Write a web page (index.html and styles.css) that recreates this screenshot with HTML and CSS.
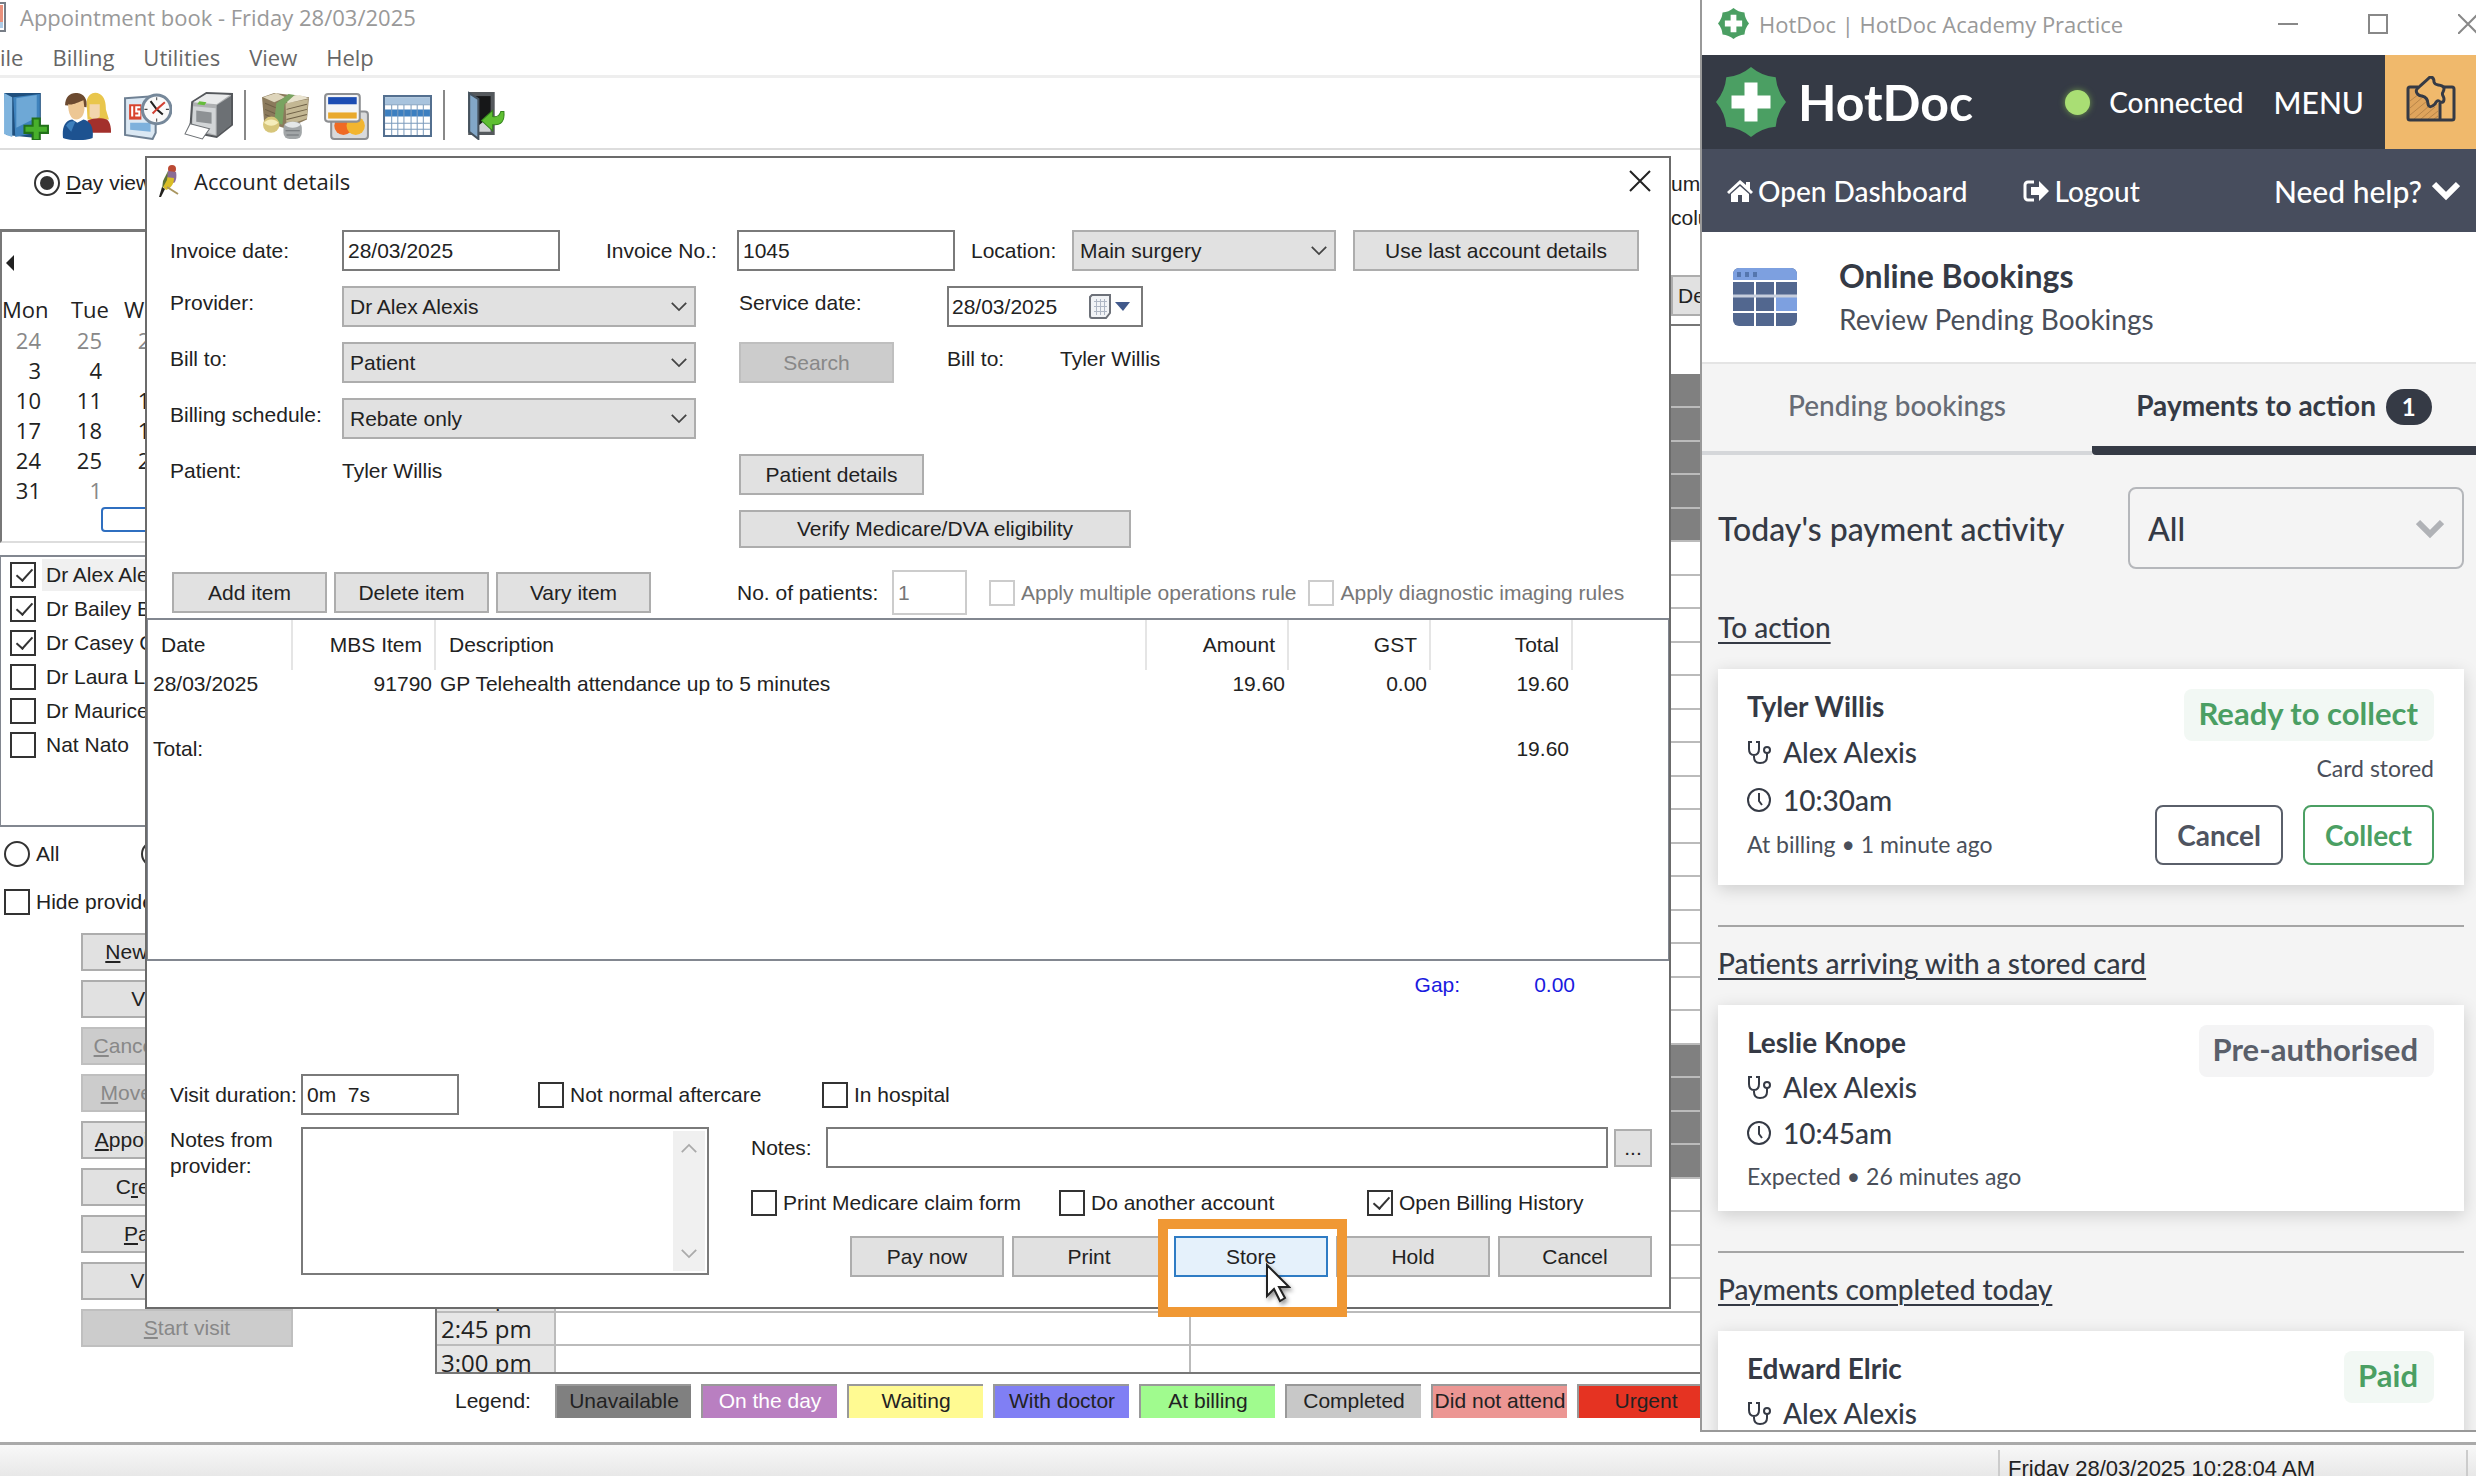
FILE: index.html
```html
<!DOCTYPE html>
<html lang="en">
<head>
    <meta charset="UTF-8">
    <meta name="viewport" content="width=device-width, initial-scale=1.0">
    <title>Appointment book - Friday 28/03/2025</title>
    <link rel="stylesheet" href="styles.css">
</head>
<body>
    <svg class="sprite" aria-hidden="true">
        <symbol id="hotdoc" viewBox="0 0 70 70">
            <path fill="#4b9f63" d="M35 0Q45.7 9.1 59.7 10.3Q60.9 24.3 70 35Q60.9 45.7 59.7 59.7Q45.7 60.9 35 70Q24.3 60.9 10.3 59.7Q9.1 45.7 0 35Q9.1 24.3 10.3 10.3Q24.3 9.1 35 0Z"/>
            <path fill="#fff" d="M28.500 15.500h13v13h13v13h-13v13h-13v-13h-13v-13h13z"/>
        </symbol>
        <symbol id="chevron" viewBox="0 0 20 12">
            <path fill="none" stroke="currentColor" stroke-width="2" d="M2 2l8 8 8-8"/>
        </symbol>
        <symbol id="chevron-bold" viewBox="0 0 28 20">
            <path fill="none" stroke="currentColor" stroke-width="6" d="M2 3l12 12 12-12"/>
        </symbol>
        <symbol id="stethoscope" viewBox="0 0 24 24">
            <g fill="none" stroke="currentColor" stroke-width="2">
                <path d="M5 2H2v7c0 4 2 6 5 6s5-2 5-6V2H9M7 15v2c0 4 2 6 6 6s7-2 7-6v-4"/>
                <circle cx="20" cy="10" r="3"/>
            </g>
        </symbol>
        <symbol id="clock" viewBox="0 0 24 24">
            <circle cx="12" cy="12" r="11" fill="none" stroke="currentColor" stroke-width="2"/>
            <path fill="none" stroke="currentColor" stroke-width="2" d="M12 5v8l3 4"/>
        </symbol>
    </svg>

    <!-- Appointment book -->
    <div class="app">
        <header class="app-title">
            <svg class="app-icon" viewBox="0 0 7 30"><path fill="#e9917d" d="M0 3h3v17H0z"/><path fill="#aecbe6" d="M0 20h3v6H0z"/><path fill="none" stroke="#777d86" stroke-width="2" d="M0 1h5v28H0"/></svg>
            <span>Appointment book - Friday 28/03/2025</span>
        </header>
        <nav class="menu">
            <a href="#">ile</a>
            <a href="#">Billing</a>
            <a href="#">Utilities</a>
            <a href="#">View</a>
            <a href="#">Help</a>
        </nav>
        <div class="toolbar">
            <button class="tool" aria-label="New appointment">
                <svg viewBox="0 0 48 48"><path fill="#1f4f7d" d="M3 2h36v38l-4 6-30-3z"/><path fill="#7fb4de" d="M3 2l8 4v39l-8-3z"/><path fill="#3f83bd" d="M12 6l26-3v37l-24 5z"/><path fill="#6ea8d6" d="M15 7l20-3v22L15 36z"/><path fill="#48b02c" stroke="#22701a" stroke-width="2" d="M31 27h7v7h8v7h-8v7h-7v-7h-8v-7h8z"/></svg>
            </button>
            <button class="tool" aria-label="Patients">
                <svg viewBox="0 0 48 48"><path fill="#e9c64c" d="M24 10c2-8 8-10 13-7 5 3 6 9 6 15l3 10H25z"/><path fill="#f3d6ae" d="M27 13h10v12l-5 4-5-4z"/><path fill="#a3302c" d="M25 29c6-3 14-3 19-1 4 3 4 10 4 13H26z"/><path fill="#6c4a30" d="M3 14C3 5 9 1 15 2c7 1 10 6 9 14z"/><path fill="#edc794" d="M6 13c5 1 9-2 15-4l1 8c0 6-3 11-8 11s-8-6-8-15z"/><path fill="#1d5290" d="M1 46c-1-9 1-17 9-18l5 3 6-3c8 2 10 9 9 18-8 3-21 3-29 0z"/><path fill="#3e80bd" d="M4 34c2-4 6-5 9-4l-4 10z"/></svg>
            </button>
            <button class="tool" aria-label="Appointments">
                <svg viewBox="0 0 48 48"><path fill="#dbe8f3" stroke="#6f8194" stroke-width="2" d="M2 7l30-2v36l-3 6-27-4z"/><path fill="#d8442e" d="M6 13h12v15H6z"/><path fill="#fff" d="M8 15h2v10H8zM12 15h5v2h-3v2h3v6h-5v-2h3v-2h-3z"/><path fill="#7eb1dc" d="M7 31h20v9l-20-2z"/><circle cx="33" cy="18" r="14" fill="#fafafa" stroke="#76889a" stroke-width="3"/><path stroke="#222" stroke-width="2" fill="none" d="M27 10l6 8 6 5"/><path stroke="#d24032" fill="none" stroke-width="2" d="M33 18l8-7M33 18l-4 4"/><path stroke="#444" d="M33 6v3M33 27v3M21 18h3M42 18h3"/></svg>
            </button>
            <button class="tool" aria-label="Print">
                <svg viewBox="0 0 48 48"><path fill="#aeb0b2" stroke="#55585c" stroke-width="2" d="M8 11L22 2l25 1v30L32 45 6 40z"/><path fill="#e9eaeb" d="M9 11L22 3l23 1-13 9z"/><path fill="#6c7074" d="M32 14l14-9v28L32 44z"/><path fill="#d2d5d7" d="M9 15l22 2v26L8 36z"/><path fill="#8d9194" d="M12 19l15 2v11l-15-2z"/><path fill="#65bd3b" d="M15 10l7 1-2 3-7-1z"/><path fill="#fff" stroke="#6c7074" d="M6 32l19 5-7 10-17-5z"/></svg>
            </button>
            <span class="tool-sep"></span>
            <button class="tool" aria-label="Accounts">
                <svg viewBox="0 0 48 48"><path fill="#8b7a5c" d="M1 6l12-4 34 4-2 22-20 9-22-7z"/><path fill="#ded5bb" d="M2 6l13-4 9 4-11 5z"/><path fill="#c3b793" d="M24 12l22-4-1 19-20 7z"/><path fill="#e9e3cf" d="M24 6l14-2 9 3-21 5z"/><path stroke="#6e6046" d="M25 18l20-5M25 23l20-5M25 28l20-5M4 12l12 5M4 18l12 5M4 23l12 5"/><path fill="#79a361" d="M15 12l12-9 6 1-10 9-2 20-8-3z"/><circle cx="10" cy="33" r="8" fill="#d7c67b"/><path fill="#f5edbb" d="M3 31c4-4 10-4 14 0-4 4-10 4-14 0z"/><rect x="22" y="30" width="18" height="17" rx="6" fill="#a2a6a8"/><path fill="#e4e7e8" d="M23 33c4-4 12-4 16 0-4 4-12 4-16 0z"/><path stroke="#6f7376" d="M24 39h14M25 43h12"/></svg>
            </button>
            <button class="tool" aria-label="Cards">
                <svg viewBox="0 0 48 48"><rect x="9" y="20" width="36" height="27" rx="3" fill="#d9dadb" stroke="#8d8f92" stroke-width="2"/><circle cx="21" cy="34" r="9" fill="#ef6a24"/><circle cx="33" cy="34" r="9" fill="#f2b52f"/><rect x="3" y="3" width="34" height="27" rx="3" fill="#f4f5f6" stroke="#8d8f92" stroke-width="2"/><path fill="#1c4db3" d="M6 6h28v7H6z"/><path fill="#e9a92d" d="M6 21h28v6H6z"/></svg>
            </button>
            <button class="tool" aria-label="Day sheet">
                <svg viewBox="0 0 48 48"><path fill="#fff" stroke="#536f8f" stroke-width="2" d="M1 5h46v39H1z"/><path fill="#a8c3dd" d="M2 6h44v7H2z"/><path fill="#3c7fc0" d="M2 18h44v7H2z"/><path stroke="#7c9cbd" d="M2 13.500h44M2 31.500h44M2 37.500h44M8.500 13v30M14.500 13v30M20.500 13v30M27.500 13v30M33.500 13v30M39.500 13v30"/></svg>
            </button>
            <span class="tool-sep"></span>
            <button class="tool" aria-label="Exit">
                <svg viewBox="0 0 48 48"><path fill="#55595d" d="M8 1h26v42H8z"/><path fill="#161718" d="M12 5h18v34H12z"/><path fill="#d0d3d5" d="M18 34l12-10v16H18z"/><path fill="#82a7c8" stroke="#45525e" stroke-width="2" d="M9 2l9 6v39L9 40z"/><path fill="#5fbf32" stroke="#34851c" stroke-width="1" d="M21 29l11-10v6c5 1 7-1 8-5h3c1 10-3 14-11 13v6z"/></svg>
            </button>
        </div>

        <div class="app-body">
            <aside class="sidebar">
                <label class="day-view"><input type="radio" name="view" checked><span><u>D</u>ay view</span></label>
                <div class="calendar">
                    <span class="cal-prev"></span>
                    <table>
                        <thead><tr><th>Mon</th><th>Tue</th><th>Wed</th></tr></thead>
                        <tbody>
                            <tr class="other"><td>24</td><td>25</td><td>26</td></tr>
                            <tr><td>3</td><td>4</td><td>5</td></tr>
                            <tr><td>10</td><td>11</td><td>12</td></tr>
                            <tr><td>17</td><td>18</td><td>19</td></tr>
                            <tr><td>24</td><td>25</td><td>26</td></tr>
                            <tr><td>31</td><td class="other">1</td><td class="other">2</td></tr>
                        </tbody>
                    </table>
                    <span class="cal-today"></span>
                </div>
                <div class="providers">
                    <label class="selected"><input type="checkbox" checked><span>Dr Alex Alexis</span></label>
                    <label><input type="checkbox" checked><span>Dr Bailey B</span></label>
                    <label><input type="checkbox" checked><span>Dr Casey C</span></label>
                    <label><input type="checkbox"><span>Dr Laura La</span></label>
                    <label><input type="checkbox"><span>Dr Maurice</span></label>
                    <label><input type="checkbox"><span>Nat Nato</span></label>
                </div>
                <div class="filter">
                    <label><input type="radio" name="filter"><span>All</span></label>
                    <label><input type="radio" name="filter" aria-label="Selected"></label>
                </div>
                <label class="hide-providers"><input type="checkbox"><span>Hide providers</span></label>
                <div class="side-buttons">
                    <button class="btn"><span><u>N</u>ew appointment</span></button>
                    <button class="btn">View details</button>
                    <button class="btn" disabled><span><u>C</u>ancel appointment</span></button>
                    <button class="btn" disabled><span><u>M</u>ove appointment</span></button>
                    <button class="btn"><span><u>A</u>ppointment details</span></button>
                    <button class="btn"><span>C<u>r</u>eate account</span></button>
                    <button class="btn"><span><u>P</u>ay accounts</span></button>
                    <button class="btn">View history</button>
                    <button class="btn" disabled><span><u>S</u>tart visit</span></button>
                </div>
            </aside>

            <main class="schedule">
                <div class="schedule-options">
                    <p>umn</p>
                    <p>columns</p>
                    <button class="btn">Details</button>
                </div>
                <div class="schedule-grid">
                    <table>
                        <thead><tr><th></th><th></th><th></th><th></th></tr></thead>
                        <tbody>
                            <tr class="off"><th>7:45 am</th><td></td><td></td><td></td></tr>
                            <tr class="off"><th>8:00 am</th><td></td><td></td><td></td></tr>
                            <tr class="off"><th>8:15 am</th><td></td><td></td><td></td></tr>
                            <tr class="off"><th>8:30 am</th><td></td><td></td><td></td></tr>
                            <tr class="off"><th>8:45 am</th><td></td><td></td><td></td></tr>
                            <tr><th>9:00 am</th><td></td><td></td><td></td></tr>
                            <tr><th>9:15 am</th><td></td><td></td><td></td></tr>
                            <tr><th>9:30 am</th><td></td><td></td><td></td></tr>
                            <tr><th>9:45 am</th><td></td><td></td><td></td></tr>
                            <tr><th>10:00 am</th><td></td><td></td><td></td></tr>
                            <tr><th>10:15 am</th><td></td><td></td><td></td></tr>
                            <tr><th>10:30 am</th><td></td><td></td><td></td></tr>
                            <tr><th>10:45 am</th><td></td><td></td><td></td></tr>
                            <tr><th>11:00 am</th><td></td><td></td><td></td></tr>
                            <tr><th>11:15 am</th><td></td><td></td><td></td></tr>
                            <tr><th>11:30 am</th><td></td><td></td><td></td></tr>
                            <tr><th>11:45 am</th><td></td><td></td><td></td></tr>
                            <tr><th>12:00 pm</th><td></td><td></td><td></td></tr>
                            <tr><th>12:15 pm</th><td></td><td></td><td></td></tr>
                            <tr><th>12:30 pm</th><td></td><td></td><td></td></tr>
                            <tr class="off"><th>12:45 pm</th><td></td><td></td><td></td></tr>
                            <tr class="off"><th>1:00 pm</th><td></td><td></td><td></td></tr>
                            <tr class="off"><th>1:15 pm</th><td></td><td></td><td></td></tr>
                            <tr class="off"><th>1:30 pm</th><td></td><td></td><td></td></tr>
                            <tr><th>1:45 pm</th><td></td><td></td><td></td></tr>
                            <tr><th>2:00 pm</th><td></td><td></td><td></td></tr>
                            <tr><th>2:15 pm</th><td></td><td></td><td></td></tr>
                            <tr><th>2:30 pm</th><td></td><td></td><td></td></tr>
                            <tr><th>2:45 pm</th><td></td><td></td><td></td></tr>
                            <tr><th>3:00 pm</th><td></td><td></td><td></td></tr>
                        </tbody>
                    </table>
                </div>
                <div class="legend">
                    <span class="legend-title">Legend:</span>
                    <span class="key unavailable">Unavailable</span>
                    <span class="key on-the-day">On the day</span>
                    <span class="key waiting">Waiting</span>
                    <span class="key with-doctor">With doctor</span>
                    <span class="key at-billing">At billing</span>
                    <span class="key completed">Completed</span>
                    <span class="key missed">Did not attend</span>
                    <span class="key urgent">Urgent</span>
                </div>
            </main>
        </div>
        <footer class="statusbar">
            <span class="status-time">Friday 28/03/2025 10:28:04 AM</span>
        </footer>
    </div>

    <!-- Account details dialog -->
    <section class="dialog">
        <header class="dialog-title">
            <svg class="bird" viewBox="0 0 20 32"><circle cx="13" cy="4" r="4" fill="#bb4a34"/><path fill="#8a6b95" d="M9 6l8 1c1 5 0 9-2 11l-8-3z"/><path fill="#d9bd27" d="M6 12l9 1c0 6-3 10-8 12l-3-3z"/><path fill="#5c7336" d="M9 6L4 16 3 24l5-9z"/><path fill="#23221f" d="M3 22l3 2-4 8H0z"/><path stroke="#a99660" stroke-width="2" d="M8 22l11 7"/></svg>
            <h1>Account details</h1>
            <button class="close" aria-label="Close"><svg viewBox="0 0 22 22"><path stroke="#222" stroke-width="2" d="M1 1l20 20M21 1L1 21"/></svg></button>
        </header>

        <form class="account">
            <div class="row invoice-row">
                <label for="invDate">Invoice date:</label>
                <input class="text" id="invDate" value="28/03/2025">
                <label class="inv-no" for="invNo">Invoice No.:</label>
                <input class="text" id="invNo" value="1045">
                <label class="loc" for="location">Location:</label>
                <div class="select location"><select id="location"><option>Main surgery</option></select><svg><use href="#chevron"/></svg></div>
                <button type="button" class="btn last-account">Use last account details</button>
            </div>
            <div class="row">
                <label for="provider">Provider:</label>
                <div class="select"><select id="provider"><option>Dr Alex Alexis</option></select><svg><use href="#chevron"/></svg></div>
                <label for="serviceDate">Service date:</label>
                <div class="datebox">
                    <input class="text" id="serviceDate" value="28/03/2025">
                    <svg class="date-icon" viewBox="0 0 42 28"><path fill="#f1f3f6" stroke="#6d7179" stroke-width="2" d="M3 2h18v18l-4 5H3a2 2 0 0 1-2-2V4z"/><path stroke="#aeb6c4" stroke-width="1" d="M5 8.500h13M5 13.500h13M5 18.500h13M7.500 6v16M11.500 6v16M15.500 6v16"/><path fill="#41598b" d="M26 9h15l-7 9z"/></svg>
                </div>
            </div>
            <div class="row">
                <label for="billTo">Bill to:</label>
                <div class="select"><select id="billTo"><option>Patient</option></select><svg><use href="#chevron"/></svg></div>
                <button type="button" class="btn search" disabled>Search</button>
                <div class="bill-name"><span>Bill to:</span><span>Tyler Willis</span></div>
            </div>
            <div class="row">
                <label for="schedule">Billing schedule:</label>
                <div class="select"><select id="schedule"><option>Rebate only</option></select><svg><use href="#chevron"/></svg></div>
            </div>
            <div class="row">
                <span>Patient:</span>
                <span>Tyler Willis</span>
                <button type="button" class="btn patient-details">Patient details</button>
            </div>
            <div class="row">
                <button type="button" class="btn verify">Verify Medicare/DVA eligibility</button>
            </div>
            <div class="row item-row">
                <div class="item-buttons">
                    <button type="button" class="btn">Add item</button>
                    <button type="button" class="btn">Delete item</button>
                    <button type="button" class="btn">Vary item</button>
                </div>
                <label class="patients-label" for="patients">No. of patients:</label>
                <input class="text patients" id="patients" value="1" disabled>
                <label class="check disabled"><input type="checkbox" disabled><span>Apply multiple operations rule</span></label>
                <label class="check disabled"><input type="checkbox" disabled><span>Apply diagnostic imaging rules</span></label>
            </div>

            <div class="items">
                <table>
                    <colgroup><col class="c-date"><col class="c-mbs"><col class="c-desc"><col class="c-num"><col class="c-num"><col class="c-num"><col></colgroup>
                    <thead>
                        <tr><th>Date</th><th class="num">MBS Item</th><th>Description</th><th class="num">Amount</th><th class="num">GST</th><th class="num">Total</th><th></th></tr>
                    </thead>
                    <tbody>
                        <tr><td>28/03/2025</td><td class="num">91790</td><td>GP Telehealth attendance up to 5 minutes</td><td class="num">19.60</td><td class="num">0.00</td><td class="num">19.60</td><td></td></tr>
                    </tbody>
                    <tfoot>
                        <tr><td>Total:</td><td></td><td></td><td></td><td></td><td class="num">19.60</td><td></td></tr>
                    </tfoot>
                </table>
            </div>

            <div class="gap-row"><span>Gap:</span><span>0.00</span></div>

            <div class="visit-row">
                <label for="duration">Visit duration:</label>
                <input class="text" id="duration" value="0m  7s">
                <label class="check aftercare"><input type="checkbox"><span>Not normal aftercare</span></label>
                <label class="check"><input type="checkbox"><span>In hospital</span></label>
            </div>

            <div class="notes-row">
                <label for="provNotes">Notes from provider:</label>
                <div class="prov-notes">
                    <textarea id="provNotes"></textarea>
                    <div class="scroll"><svg class="up"><use href="#chevron"/></svg><svg><use href="#chevron"/></svg></div>
                </div>
                <div class="finish">
                    <div class="notes">
                        <label for="notes">Notes:</label>
                        <input class="text" id="notes">
                        <button type="button" class="btn more">...</button>
                    </div>
                    <div class="checks">
                        <label class="check"><input type="checkbox"><span>Print Medicare claim form</span></label>
                        <label class="check"><input type="checkbox"><span>Do another account</span></label>
                        <label class="check"><input type="checkbox" checked><span>Open Billing History</span></label>
                    </div>
                    <div class="actions">
                        <button type="button" class="btn">Pay now</button>
                        <button type="button" class="btn">Print</button>
                        <div class="store">
                            <button type="button" class="btn primary">Store</button>
                            <div class="highlight"></div>
                            <svg class="cursor" viewBox="0 0 26 40"><path fill="#fff" stroke="#222" stroke-width="2" d="M2 2v31l7-7 6 12 5-3-6-11h10z"/></svg>
                        </div>
                        <button type="button" class="btn">Hold</button>
                        <button type="button" class="btn">Cancel</button>
                    </div>
                </div>
            </div>
        </form>
    </section>

    <!-- HotDoc side window -->
    <section class="hotdoc">
        <header class="hd-title">
            <svg class="hd-small"><use href="#hotdoc"/></svg>
            <span>HotDoc | HotDoc Academy Practice</span>
            <div class="win-buttons">
                <button aria-label="Minimise"><svg viewBox="0 0 20 20"><path stroke="#888" stroke-width="2" d="M0 10h20"/></svg></button>
                <button aria-label="Maximise"><svg viewBox="0 0 20 20"><path fill="none" stroke="#888" stroke-width="2" d="M1 1h18v18H1z"/></svg></button>
                <button aria-label="Close window"><svg viewBox="0 0 20 20"><path stroke="#888" stroke-width="2" d="M0 0l20 20M20 0L0 20"/></svg></button>
            </div>
        </header>
        <div class="hd-bar">
            <svg class="hd-logo"><use href="#hotdoc"/></svg>
            <strong>HotDoc</strong>
            <span class="dot"></span>
            <span class="connected">Connected</span>
            <a class="hd-menu" href="#">MENU</a>
            <button class="addon" aria-label="What's new">
                <svg viewBox="0 0 50 46"><path fill="#dfa45c" d="M3 12h8l9 10 4 9 8-3v15H3z"/><path stroke="#b98548" d="M4 25l9-7M4 32l14-12M4 39l17-14M8 43l15-13M15 43l14-12M22 43l10-8M28 43l4-3"/><path fill="none" stroke="#353a45" stroke-width="3" stroke-linejoin="round" d="M12 11H4a2 2 0 0 0-2 2v29a2 2 0 0 0 2 2h42a2 2 0 0 0 2-2V13a2 2 0 0 0-2-2h-8M34 27v16"/><path fill="#f0b96c" stroke="#353a45" stroke-width="3" stroke-linejoin="round" d="M24 1c3 0 4 2 4 5 1 4 5 2 8 4 3 1 2 4 1 6-2 3 1 4 1 7 0 4-3 4-5 2-2-1-3 1-4 3-3 3-6 4-7 0 0-5-2-7-6-8-4 0-7-4-5-7 4-4 8-7 13-12z"/></svg>
            </button>
        </div>
        <nav class="hd-nav">
            <a href="#"><svg class="home" viewBox="0 0 26 22"><path fill="currentColor" d="M13 0l6 5V2h4v7l3 3-2 2L13 4 2 14l-2-2zM4 14l9-8 9 8v8h-7v-7h-4v7H4z"/></svg>Open Dashboard</a>
            <a class="logout" href="#"><svg class="home" viewBox="0 0 26 22"><path fill="none" stroke="currentColor" stroke-width="3" d="M11 2H5a3 3 0 0 0-3 3v12a3 3 0 0 0 3 3h6"/><path fill="currentColor" d="M8 7h8V1l10 10-10 10v-6H8z"/></svg>Logout</a>
            <a class="help" href="#">Need help?<svg><use href="#chevron-bold"/></svg></a>
        </nav>
        <div class="hd-heading">
            <svg viewBox="0 0 64 58"><rect width="64" height="58" rx="6" fill="#52678f"/><path fill="#7da0e0" d="M0 12V6a6 6 0 0 1 6-6h52a6 6 0 0 1 6 6v6z"/><path fill="#7da0e0" d="M43 29h21v14H43z"/><path fill="#5576ae" d="M4 4h4v5H4zM12 4h4v5h-4zM20 4h4v5h-4z"/><path stroke="#fff" stroke-width="2" d="M0 13h64M22 13v45M42 13v45M0 44h64"/><path stroke="#c6cedd" stroke-width="3" d="M0 28h64"/></svg>
            <div>
                <h2>Online Bookings</h2>
                <p>Review Pending Bookings</p>
            </div>
        </div>
        <nav class="tabs">
            <a href="#">Pending bookings</a>
            <a class="active" href="#">Payments to action <span class="count">1</span></a>
        </nav>
        <div class="hd-body">
            <div class="activity">
                <label for="activity">Today's payment activity</label>
                <div class="activity-select"><select id="activity"><option>All</option></select><svg><use href="#chevron-bold"/></svg></div>
            </div>

            <h3>To action</h3>
            <article class="card first">
                <div class="who">
                    <h4>Tyler Willis</h4>
                    <p><svg><use href="#stethoscope"/></svg>Alex Alexis</p>
                    <p><svg><use href="#clock"/></svg>10:30am</p>
                    <small>At billing • 1 minute ago</small>
                </div>
                <div class="state">
                    <span class="tag green">Ready to collect</span>
                    <small>Card stored</small>
                    <div class="card-buttons">
                        <button>Cancel</button>
                        <button class="green">Collect</button>
                    </div>
                </div>
            </article>
            <hr>
            <h3>Patients arriving with a stored card</h3>
            <article class="card">
                <div class="who">
                    <h4>Leslie Knope</h4>
                    <p><svg><use href="#stethoscope"/></svg>Alex Alexis</p>
                    <p><svg><use href="#clock"/></svg>10:45am</p>
                    <small>Expected • 26 minutes ago</small>
                </div>
                <div class="state"><span class="tag">Pre-authorised</span></div>
            </article>
            <hr>
            <h3>Payments completed today</h3>
            <article class="card">
                <div class="who">
                    <h4>Edward Elric</h4>
                    <p><svg><use href="#stethoscope"/></svg>Alex Alexis</p>
                </div>
                <div class="state"><span class="tag green">Paid</span></div>
            </article>
        </div>
    </section>
</body>
</html>
```
FILE: styles.css
```css
* {
    margin: 0;
    padding: 0;
    box-sizing: border-box;
}

body {
    height: 100vh;
    overflow: hidden;
    position: relative;
    background: #fff;
    font-family: "Liberation Sans", Arial, sans-serif;
    font-size: 21px;
    color: #222;
}

button, input, select, textarea {
    font: inherit;
    color: inherit;
}

a {
    color: inherit;
    text-decoration: none;
}

table {
    border-collapse: collapse;
    table-layout: fixed;
}

.sprite {
    display: none;
}

/* shared controls */

.btn {
    height: 41px;
    border: 2px solid #adadad;
    background: #e1e1e1;
    white-space: nowrap;
    overflow: hidden;
    text-align: center;
}

.btn:disabled {
    background: #ccc;
    border-color: #bfbfbf;
    color: #888;
}

.btn.primary {
    background: #e5f1fb;
    border-color: #2f7cc4;
}

.text {
    height: 41px;
    border: 2px solid #7a7a7a;
    background: #fff;
    padding: 0 4px;
    min-width: 0;
}

.text:disabled {
    border-color: #ccc;
    color: #777;
}

input[type="checkbox"], input[type="radio"] {
    appearance: none;
    flex: none;
    width: 26px;
    height: 26px;
    border: 2px solid #333;
    background: #fff;
    position: relative;
}

input[type="checkbox"]:checked::after {
    content: "";
    position: absolute;
    left: 8px;
    top: 1px;
    width: 7px;
    height: 14px;
    border: solid #333;
    border-width: 0 2px 2px 0;
    transform: rotate(42deg);
}

input[type="checkbox"]:disabled {
    border-color: #ccc;
}

input[type="radio"] {
    border-radius: 50%;
}

input[type="radio"]:checked::after {
    content: "";
    position: absolute;
    inset: 4px;
    border-radius: 50%;
    background: #333;
}

.check {
    display: flex;
    align-items: center;
    gap: 6px;
    white-space: nowrap;
}

.check.disabled {
    color: #777;
}

.select {
    position: relative;
    width: 354px;
    height: 41px;
}

.select select {
    appearance: none;
    width: 100%;
    height: 100%;
    border: 2px solid #adadad;
    background: #e1e1e1;
    padding: 0 6px;
}

.select svg {
    position: absolute;
    right: 8px;
    top: 15px;
    width: 18px;
    height: 11px;
    color: #444;
}

/* appointment book */

.app {
    height: 100%;
    display: flex;
    flex-direction: column;
}

.app-title {
    display: flex;
    align-items: center;
    gap: 13px;
    height: 34px;
    font-family: "Open Sans", sans-serif;
    font-size: 22px;
    color: #999;
}

.app-icon {
    width: 7px;
    height: 30px;
}

.menu {
    display: flex;
    gap: 29px;
    height: 44px;
    border-bottom: 3px solid #eee;
    line-height: 46px;
    font-family: "Open Sans", sans-serif;
    font-size: 22px;
    color: #666;
}

.toolbar {
    display: flex;
    align-items: center;
    gap: 12px;
    height: 72px;
    padding: 4px 0 0 1px;
    border-bottom: 2px solid #ddd;
}

.tool {
    width: 49px;
    height: 49px;
    border: none;
    background: none;
}

.tool svg {
    display: block;
    width: 49px;
    height: 49px;
}

.tool-sep {
    width: 2px;
    height: 50px;
    background: #888;
    margin: 0 3px 0 -1px;
}

.app-body {
    flex: 1;
    min-height: 0;
    display: grid;
    grid-template-columns: 435px 1fr;
}

.sidebar label {
    display: flex;
    align-items: center;
    gap: 6px;
    white-space: nowrap;
}

.sidebar .day-view {
    height: 66px;
    padding-left: 34px;
}

.calendar {
    height: 314px;
    margin-top: 13px;
    border: solid #777;
    border-width: 3px 2px 0 2px;
    border-bottom: 2px solid #ddd;
    font-family: "Open Sans", sans-serif;
    font-size: 22px;
    display: flex;
    flex-direction: column;
}

.cal-prev {
    margin: 23px 0 22px 4px;
    border: 8px solid transparent;
    border-left-width: 0;
    border-right-color: #222;
    width: 0;
}

.calendar table {
    width: 183px;
}

.calendar th {
    width: 61px;
    height: 32px;
    font-weight: 400;
    text-align: left;
}

.calendar th:nth-child(2) {
    padding-left: 8px;
}

.calendar td {
    height: 30px;
    line-height: 28px;
    text-align: right;
    padding-right: 22px;
}

.calendar .other {
    color: #888;
}

.cal-today {
    margin: 2px 0 0 99px;
    width: 90px;
    height: 25px;
    border: 2px solid #2f6fc0;
    border-radius: 4px;
}

.providers {
    height: 272px;
    margin-top: 12px;
    border: 2px solid #828790;
    border-left-width: 1px;
    padding-top: 1px;
}

.providers label {
    height: 34px;
    padding-left: 9px;
}

.providers span {
    line-height: 32px;
    padding: 0 4px;
    flex: 1;
}

.providers .selected span {
    background: #f0f0f0;
}

.filter {
    display: grid;
    grid-template-columns: 137px 1fr;
    padding: 14px 4px 0;
}

.sidebar .hide-providers {
    padding: 22px 4px 0;
}

.side-buttons {
    display: grid;
    gap: 9px;
    width: 212px;
    margin: 18px 0 0 81px;
}

.side-buttons .btn {
    height: 38px;
    line-height: 34px;
    display: flex;
    justify-content: center;
}

.schedule {
    display: flex;
    flex-direction: column;
    min-width: 0;
}

.schedule-options {
    display: flex;
    flex-direction: column;
    height: 174px;
    margin-left: 1236px;
    padding-top: 17px;
}

.schedule-options p {
    line-height: 34px;
}

.schedule-options .btn {
    width: 120px;
    margin-top: 40px;
    padding-left: 5px;
    text-align: left;
}

.schedule-grid {
    height: 1050px;
    margin-right: 14px;
    border: 2px solid #777;
    overflow: hidden;
}

.schedule-grid table {
    width: 100%;
}

.schedule-grid thead th {
    height: 48px;
}

.schedule-grid th:first-child {
    width: 118px;
}

.schedule-grid tbody th {
    height: 34px;
    padding-left: 4px;
    background: #e6e6e6;
    border: solid #bbb;
    border-width: 0 2px 2px 0;
    font-family: "Open Sans", sans-serif;
    font-size: 24px;
    font-weight: 400;
    line-height: 31px;
    text-align: left;
}

.schedule-grid tbody tr:nth-child(odd) th {
    height: 33px;
}

.schedule-grid td {
    border: solid #bbb;
    border-width: 0 2px 2px 0;
}

.schedule-grid .off td {
    background: #808080;
}

.legend {
    display: flex;
    gap: 10px;
    padding: 10px 0 0 20px;
    line-height: 33px;
}

.legend-title {
    width: 90px;
}

.key {
    width: 136px;
    height: 34px;
    border: solid #999;
    border-width: 2px 0 0 2px;
    text-align: center;
    white-space: nowrap;
    line-height: 29px;
}

.unavailable { background: #808080; }
.on-the-day { background: #b97fc1; color: #fff; }
.waiting { background: #fffa92; }
.with-doctor { background: #807ff4; }
.at-billing { background: #a0fb8e; }
.completed { background: #c8c8c8; }
.missed { background: #ec9693; }
.urgent { background: #e53322; }

.statusbar {
    height: 34px;
    border-top: 3px solid #aaa;
    background: linear-gradient(#f8f8f8, #e8e8e8);
    display: flex;
    justify-content: flex-end;
    padding: 5px 8px 0 0;
    font-size: 22px;
}

.status-time {
    width: 470px;
    border: solid #ccc;
    border-width: 0 2px;
    padding-left: 8px;
    line-height: 38px;
    white-space: nowrap;
}

/* dialog */

.dialog {
    position: absolute;
    left: 145px;
    right: 805px;
    top: 156px;
    background: #fff;
    border: 2px solid #6b6b6b;
}

.dialog-title {
    display: flex;
    align-items: center;
    height: 48px;
    padding: 0 18px 2px 12px;
    font-family: "Open Sans", sans-serif;
}

.bird {
    width: 20px;
    height: 32px;
}

.dialog-title h1 {
    flex: 1;
    margin-left: 15px;
    font-size: 22px;
    font-weight: 400;
}

.close {
    width: 22px;
    height: 22px;
    border: none;
    background: none;
}

.close svg {
    display: block;
}

.account {
    padding: 24px 0 30px;
}

.row {
    display: grid;
    grid-template-columns: 172px 397px 208px 1fr;
    height: 41px;
    margin: 0 17px 15px 23px;
    line-height: 34px;
}

.invoice-row {
    display: flex;
    align-items: center;
}

.invoice-row label {
    width: 172px;
}

.invoice-row .text {
    width: 218px;
}

.invoice-row .inv-no {
    width: 131px;
    margin-left: 46px;
}

.invoice-row .loc {
    width: 101px;
    margin-left: 16px;
}

.invoice-row .location {
    width: 264px;
}

.last-account {
    width: 286px;
    margin-left: 17px;
}

.datebox {
    position: relative;
    width: 196px;
}

.datebox .text {
    width: 100%;
    padding-left: 3px;
}

.date-icon {
    position: absolute;
    right: 12px;
    top: 7px;
    width: 42px;
    height: 28px;
}

.search {
    width: 155px;
}

.bill-name {
    display: grid;
    grid-template-columns: 113px 1fr;
}

.patient-details {
    width: 185px;
}

.verify {
    grid-column: 3 / 5;
    width: 392px;
    height: 38px;
}

.item-row {
    display: flex;
    align-items: center;
    height: 45px;
    margin: 19px 17px 3px 23px;
}

.item-buttons {
    display: flex;
    gap: 7px;
    width: 567px;
    padding-left: 2px;
}

.item-buttons .btn {
    width: 155px;
}

.patients-label {
    width: 155px;
}

.patients {
    width: 75px;
    height: 45px;
    margin-right: 22px;
}

.item-row .check {
    margin-right: 12px;
}

.items {
    min-height: 343px;
    border: 2px solid #828790;
    border-width: 2px 1px;
}

.items table {
    width: 100%;
}

.c-date { width: 144px; }
.c-mbs { width: 143px; }
.c-desc { width: 711px; }
.c-num { width: 142px; }

.items th {
    height: 50px;
    padding: 0 12px 0 13px;
    border-right: 2px solid #e5e5e5;
    font-weight: 400;
    text-align: left;
}

.items th:last-child {
    border: none;
}

.items td {
    height: 27px;
    padding: 0 3px 0 5px;
    white-space: nowrap;
}

.items tfoot td {
    padding-top: 40px;
}

.items .num {
    text-align: right;
}

.gap-row {
    display: flex;
    justify-content: flex-end;
    gap: 74px;
    margin: 0 94px 65px 0;
    line-height: 48px;
    color: #1a1ae0;
}

.visit-row {
    display: flex;
    align-items: center;
    margin: 0 17px 12px 23px;
}

.visit-row > label:first-child {
    width: 131px;
}

.visit-row .text {
    width: 158px;
    white-space: pre;
}

.visit-row .aftercare {
    width: 284px;
    margin-left: 79px;
}

.notes-row {
    display: grid;
    grid-template-columns: 131px 408px 1fr;
    margin: 0 17px 0 23px;
    line-height: 26px;
}

.prov-notes {
    display: flex;
    border: 2px solid #7a7a7a;
    height: 148px;
    padding: 2px;
}

.prov-notes textarea {
    flex: 1;
    min-width: 0;
    border: none;
    resize: none;
}

.scroll {
    width: 32px;
    background: #f0f0f0;
    display: flex;
    flex-direction: column;
    justify-content: space-between;
    align-items: center;
    padding: 12px 0;
}

.scroll svg {
    width: 18px;
    height: 11px;
    color: #aaa;
}

.scroll .up {
    transform: rotate(180deg);
}

.finish {
    display: flex;
    flex-direction: column;
    margin-left: 42px;
}

.notes {
    display: flex;
    align-items: center;
}

.notes label {
    width: 75px;
}

.notes .text {
    flex: 1;
}

.more {
    width: 38px;
    height: 38px;
    margin-left: 6px;
}

.checks {
    display: grid;
    grid-template-columns: 308px 308px 1fr;
    margin: 22px 0 20px;
}

.actions {
    display: flex;
    justify-content: flex-end;
    gap: 8px;
}

.actions .btn {
    width: 154px;
}

.store {
    position: relative;
}

.highlight {
    position: absolute;
    inset: -17px -19px -40px -16px;
    border: 10px solid #f09834;
    z-index: 1;
}

.cursor {
    position: absolute;
    left: 91px;
    top: 27px;
    width: 26px;
    height: 40px;
    z-index: 2;
    filter: drop-shadow(2px 3px 2px rgba(0, 0, 0, 0.4));
}

/* HotDoc */

.hotdoc {
    position: absolute;
    top: 0;
    right: 0;
    bottom: 44px;
    width: 776px;
    border: solid #999;
    border-width: 0 0 2px 2px;
    background: #f4f4f4;
    overflow: hidden;
    font-family: Lato, sans-serif;
    font-size: 28px;
    font-weight: 500;
    color: #353a45;
}

.hd-title {
    display: flex;
    align-items: center;
    height: 55px;
    padding: 0 0 8px 16px;
    background: #fff;
    font-family: "Open Sans", sans-serif;
    font-size: 22px;
    font-weight: 400;
    color: #999;
}

.hd-small {
    width: 31px;
    height: 31px;
    margin-right: 10px;
}

.win-buttons {
    display: flex;
    gap: 70px;
    margin: 0 -2px 0 auto;
}

.win-buttons button {
    width: 20px;
    height: 20px;
    border: none;
    background: none;
}

.win-buttons svg {
    display: block;
    width: 20px;
}

.hd-bar {
    display: flex;
    align-items: center;
    height: 94px;
    padding-left: 14px;
    background: #353a45;
    color: #fff;
}

.hd-logo {
    width: 70px;
    height: 70px;
    margin-right: 12px;
}

.hd-bar strong {
    font-size: 50px;
}

.dot {
    width: 25px;
    height: 25px;
    margin-left: auto;
    border-radius: 50%;
    background: #a9de74;
    box-shadow: 0 0 6px #6f9a4c;
}

.connected {
    margin: 0 30px 0 19px;
}

.hd-menu {
    margin-right: 21px;
    font-size: 30px;
}

.addon {
    width: 91px;
    height: 94px;
    border: none;
    background: #f0b96c;
}

.addon svg {
    width: 50px;
    height: 46px;
}

.hd-nav {
    display: flex;
    align-items: center;
    height: 83px;
    padding: 0 16px 0 25px;
    background: #474d5d;
    color: #fff;
}

.hd-nav a {
    display: flex;
    align-items: center;
}

.home {
    width: 26px;
    height: 22px;
    margin-right: 5px;
}

.logout {
    margin-left: 56px;
}

.help {
    margin-left: auto;
    font-size: 30px;
}

.hd-nav .help svg {
    width: 28px;
    height: 20px;
    margin-left: 10px;
}

.hd-heading {
    display: flex;
    align-items: center;
    gap: 42px;
    height: 132px;
    padding-left: 31px;
    background: #fff;
    border-bottom: 2px solid #e4e4e4;
}

.hd-heading svg {
    width: 64px;
    height: 58px;
}

.hd-heading h2 {
    font-size: 32px;
    line-height: 44px;
}

.hd-heading p {
    line-height: 42px;
    font-weight: 400;
    color: #4a4f5a;
}

.tabs {
    display: grid;
    grid-template-columns: 390px 1fr;
    height: 86px;
    line-height: 82px;
    text-align: center;
}

.tabs a {
    border-bottom: 4px solid #d5d7da;
    color: #666b75;
    white-space: nowrap;
}

.tabs .active {
    border-bottom: 9px solid #353a45;
    border-radius: 4px 0 0 4px;
    color: #353a45;
    font-weight: 700;
}

.count {
    display: inline-block;
    width: 46px;
    height: 36px;
    margin-left: 3px;
    border-radius: 18px;
    background: #353a45;
    color: #fff;
    font-size: 24px;
    line-height: 36px;
}

.hd-body {
    padding: 37px 12px 0 16px;
}

.activity {
    display: flex;
    align-items: center;
    justify-content: space-between;
    margin-bottom: 40px;
    font-size: 32px;
}

.activity-select {
    position: relative;
    width: 336px;
    height: 82px;
}

.activity-select select {
    appearance: none;
    width: 100%;
    height: 100%;
    padding: 0 18px;
    border: 2px solid #b5b7bb;
    border-radius: 8px;
    background: #f4f4f4;
}

.activity-select svg {
    position: absolute;
    right: 20px;
    top: 32px;
    width: 28px;
    height: 20px;
    color: #b0b2b6;
}

.hd-body h3 {
    margin-bottom: 24px;
    font-size: 28px;
    font-weight: 500;
    line-height: 36px;
    text-decoration: underline;
    text-decoration-thickness: 2px;
    text-underline-offset: 4px;
}

.card {
    display: flex;
    justify-content: space-between;
    min-height: 206px;
    padding: 20px 30px 12px 29px;
    background: #fff;
    box-shadow: 0 4px 16px rgba(0, 0, 0, 0.16);
}

.card.first {
    min-height: 216px;
}

.who h4 {
    font-size: 28px;
    line-height: 34px;
    margin-bottom: 5px;
}

.who p {
    display: flex;
    align-items: center;
    gap: 12px;
    line-height: 46px;
}

.first .who p {
    line-height: 48px;
}

.who svg {
    width: 24px;
    height: 24px;
}

.card small {
    font-size: 23px;
    font-weight: 400;
    line-height: 40px;
    color: #4a4f5a;
}

.state {
    display: flex;
    flex-direction: column;
    align-items: flex-end;
}

.tag {
    height: 52px;
    padding: 0 16px 0 14px;
    border-radius: 8px;
    background: #f4f4f5;
    color: #5a5f6a;
    font-size: 31px;
    font-weight: 700;
    line-height: 48px;
}

.tag.green {
    background: #f2f8f4;
    color: #4b9f63;
}

.state small {
    line-height: 54px;
}

.card-buttons {
    display: flex;
    gap: 20px;
    margin-top: 10px;
}

.card-buttons button {
    height: 60px;
    padding: 0 20px;
    border: 2px solid #5a5f6a;
    border-radius: 8px;
    background: #fff;
    color: #4f5460;
    font-size: 28px;
    font-weight: 700;
}

.card-buttons .green {
    border-color: #4b9f63;
    color: #4b9f63;
}

.hd-body hr {
    margin: 40px 0 18px;
    border: none;
    border-top: 2px solid #a5a5a5;
}
```
